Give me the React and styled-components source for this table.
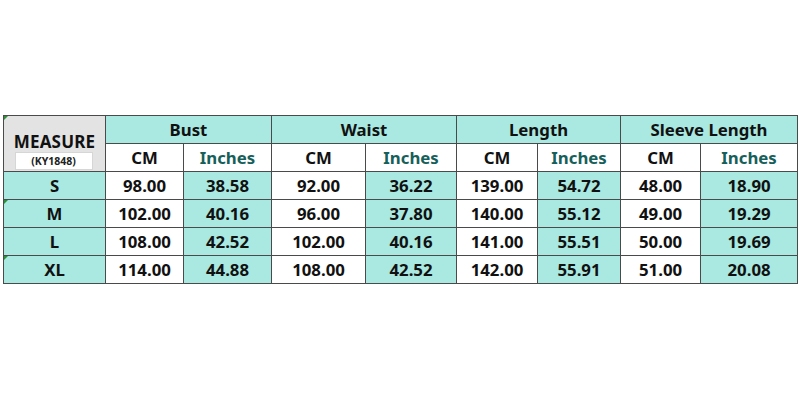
import React from "react";
import styled, { createGlobalStyle } from "styled-components";

const Global = createGlobalStyle`
  html, body { margin: 0; padding: 0; background: #ffffff; }
  body { width: 800px; height: 400px; overflow: hidden; font-family: "Noto Sans", "Open Sans", sans-serif; }
`;

const Page = styled.div`
  width: 800px;
  height: 400px;
  display: flex;
  flex-direction: column;
  padding: 115px 0 0 3px;
  box-sizing: border-box;
`;

const Table = styled.table`
  border-collapse: collapse;
  table-layout: fixed;
  width: 795px;
  border: 1px solid #4a4a4a;
`;

const Cell = styled.td`
  position: relative;
  height: 27px;
  padding: 0;
  border: 1px solid #4a4a4a;
  text-align: center;
  vertical-align: ${(p) => (p.$top ? "top" : "middle")};
  font-family: "Noto Sans", "Open Sans", sans-serif;
  font-weight: 700;
  font-size: 16.8px;
  line-height: 20px;
  color: ${(p) => (p.$accent ? "#17605a" : "#111111")};
  background: ${(p) => (p.$teal ? "#a9e9e1" : p.$gray ? "#e3e3e3" : "#ffffff")};
`;

const Corner = styled.span`
  position: absolute;
  left: 0;
  top: 0;
  width: 0;
  height: 0;
  border-top: 4px solid #2f8f3a;
  border-right: 4px solid transparent;
`;

const MeasureBox = styled.div`
  display: flex;
  flex-direction: column;
  align-items: center;
  padding: 16px 0 0 0;
`;

const MeasureTitle = styled.div`
  font-size: 17px;
  line-height: 20px;
  font-weight: 700;
  color: #111;
  letter-spacing: 0.2px;
`;

const CodeBox = styled.div`
  width: 78px;
  height: 18px;
  margin: 0 2px 0 0;
  background: #ffffff;
  border: 1px solid #d6d6d6;
  box-sizing: border-box;
  font-size: 10.5px;
  line-height: 16px;
  font-weight: 700;
  color: #222;
`;

const widths = [102, 78, 88, 94, 91, 81, 83, 80, 97];
const groups = ["Bust", "Waist", "Length", "Sleeve Length"];
const rows = [
  { s: "S", v: ["98.00", "38.58", "92.00", "36.22", "139.00", "54.72", "48.00", "18.90"] },
  { s: "M", v: ["102.00", "40.16", "96.00", "37.80", "140.00", "55.12", "49.00", "19.29"], mark: true },
  { s: "L", v: ["108.00", "42.52", "102.00", "40.16", "141.00", "55.51", "50.00", "19.69"] },
  { s: "XL", v: ["114.00", "44.88", "108.00", "42.52", "142.00", "55.91", "51.00", "20.08"], mark: true },
];

export default function App() {
  return (
    <>
      <Global />
      <Page>
        <Table>
          <colgroup>
            {widths.map((w, i) => (
              <col key={i} style={{ width: w }} />
            ))}
          </colgroup>
          <tbody>
            <tr>
              <Cell rowSpan={2} $gray $top>
                <Corner />
                <MeasureBox>
                  <MeasureTitle>MEASURE</MeasureTitle>
                  <CodeBox>(KY1848)</CodeBox>
                </MeasureBox>
              </Cell>
              {groups.map((g) => (
                <Cell key={g} colSpan={2} $teal>
                  {g}
                </Cell>
              ))}
            </tr>
            <tr>
              {groups.map((g) => (
                <React.Fragment key={g}>
                  <Cell>CM</Cell>
                  <Cell $accent>Inches</Cell>
                </React.Fragment>
              ))}
            </tr>
            {rows.map((r) => (
              <tr key={r.s}>
                <Cell $teal>
                  {r.mark && <Corner />}
                  {r.s}
                </Cell>
                {r.v.map((val, i) => (
                  <Cell key={i} $teal={i % 2 === 1}>
                    {val}
                  </Cell>
                ))}
              </tr>
            ))}
          </tbody>
        </Table>
      </Page>
    </>
  );
}
